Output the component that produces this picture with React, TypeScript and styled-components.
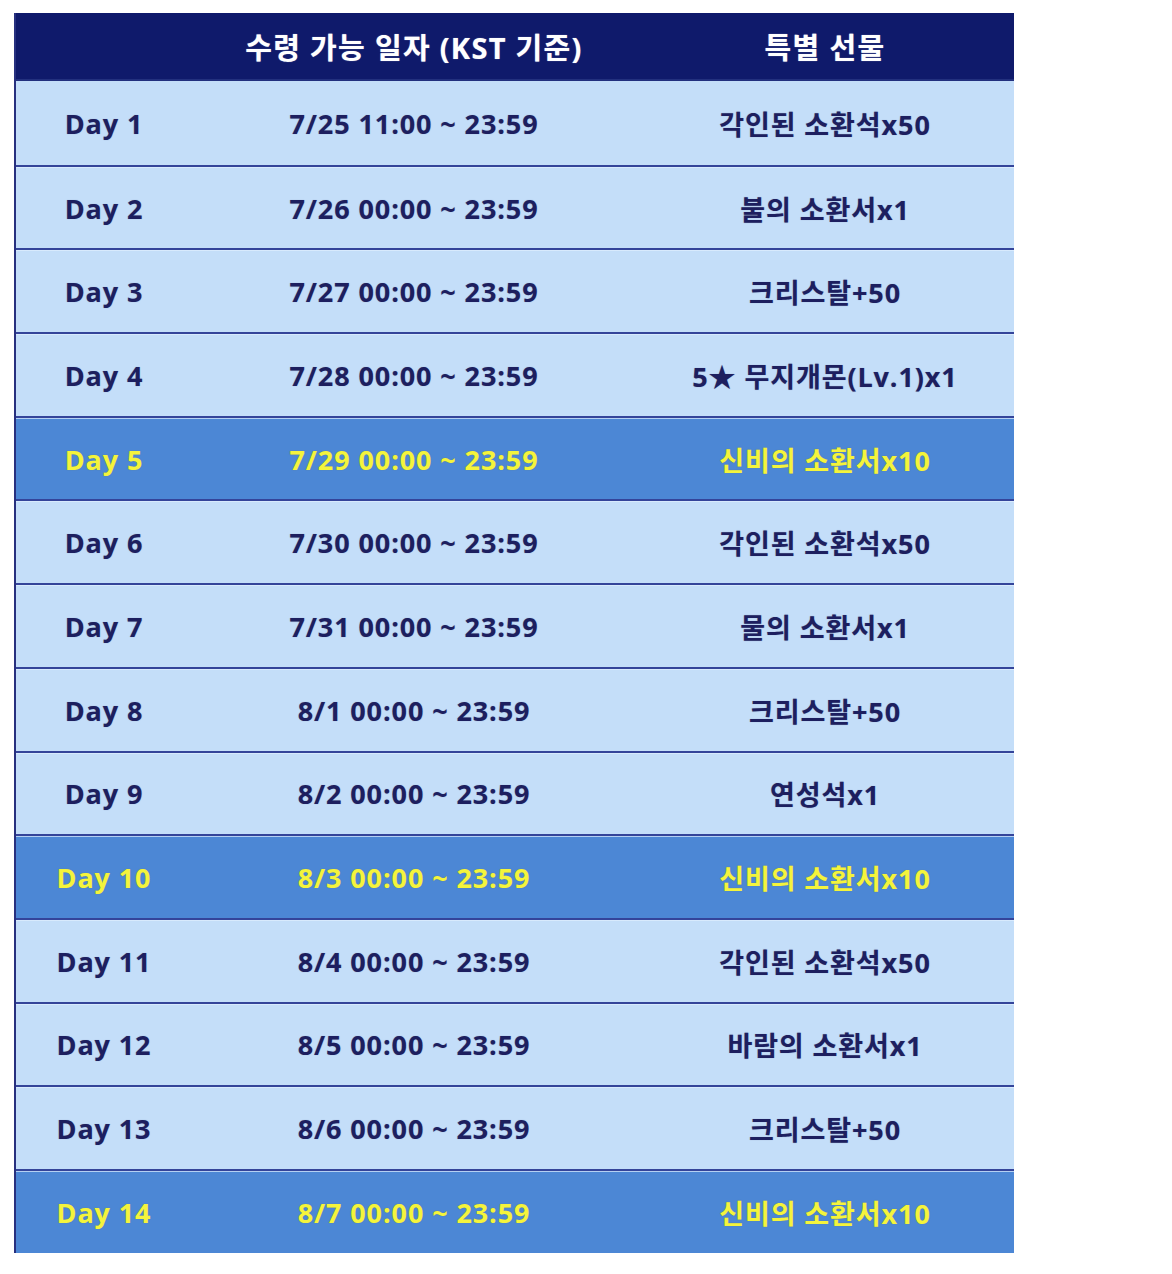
import React from "react";
import styled, { createGlobalStyle } from "styled-components";

const Global = createGlobalStyle`
  html, body { margin: 0; padding: 0; background: #ffffff; }
  body { font-family: "Open Sans", "Noto Sans CJK KR", "Noto Sans", sans-serif; }
`;

const Page = styled.div`
  padding: 13px 0 0 14px;
`;

const Table = styled.div`
  width: 1000px;
  display: flex;
  flex-direction: column;
  border-left: 2px solid #27307f;
  box-sizing: border-box;
`;

const cols = "176px 444px 378px";

const HeaderRow = styled.div`
  display: grid;
  grid-template-columns: ${cols};
  height: 68px;
  box-sizing: border-box;
  background: #0f1a6b;
  border-bottom: 2px solid #22307e;
  align-items: center;
`;

const HeadCell = styled.div`
  text-align: center;
  color: #ffffff;
  font-weight: 700;
  font-size: 29px;
  letter-spacing: 1.3px;
  white-space: nowrap;
  text-shadow: 0 0 1px rgba(255, 255, 255, 0.6);
`;

const Row = styled.div<{ $hl?: boolean }>`
  display: grid;
  grid-template-columns: ${cols};
  height: 83.7px;
  box-sizing: border-box;
  align-items: center;
  background: ${(p) => (p.$hl ? "#4c87d5" : "#c4def9")};
  border-top: 2px solid #34449a;
  box-shadow: inset 0 1px 0 rgba(225, 240, 255, 0.7);
  &:first-of-type {
    border-top: none;
    box-shadow: none;
  }
`;

const Cell = styled.div<{ $hl?: boolean }>`
  text-align: center;
  font-weight: 700;
  font-size: 27px;
  letter-spacing: 0.9px;
  white-space: nowrap;
  color: ${(p) => (p.$hl ? "#f4f43c" : "#1d1f5f")};
  text-shadow: ${(p) =>
    p.$hl ? "0 0 1px rgba(120, 120, 40, 0.6)" : "0 0 1px rgba(29, 31, 95, 0.35)"};
  padding-top: 1px;
`;

type Item = { day: string; date: string; gift: string; hl?: boolean };

const data: Item[] = [
  { day: "Day 1", date: "7/25 11:00 ~ 23:59", gift: "각인된 소환석x50" },
  { day: "Day 2", date: "7/26 00:00 ~ 23:59", gift: "불의 소환서x1" },
  { day: "Day 3", date: "7/27 00:00 ~ 23:59", gift: "크리스탈+50" },
  { day: "Day 4", date: "7/28 00:00 ~ 23:59", gift: "5★ 무지개몬(Lv.1)x1" },
  { day: "Day 5", date: "7/29 00:00 ~ 23:59", gift: "신비의 소환서x10", hl: true },
  { day: "Day 6", date: "7/30 00:00 ~ 23:59", gift: "각인된 소환석x50" },
  { day: "Day 7", date: "7/31 00:00 ~ 23:59", gift: "물의 소환서x1" },
  { day: "Day 8", date: "8/1 00:00 ~ 23:59", gift: "크리스탈+50" },
  { day: "Day 9", date: "8/2 00:00 ~ 23:59", gift: "연성석x1" },
  { day: "Day 10", date: "8/3 00:00 ~ 23:59", gift: "신비의 소환서x10", hl: true },
  { day: "Day 11", date: "8/4 00:00 ~ 23:59", gift: "각인된 소환석x50" },
  { day: "Day 12", date: "8/5 00:00 ~ 23:59", gift: "바람의 소환서x1" },
  { day: "Day 13", date: "8/6 00:00 ~ 23:59", gift: "크리스탈+50" },
  { day: "Day 14", date: "8/7 00:00 ~ 23:59", gift: "신비의 소환서x10", hl: true },
];

export default function App() {
  return (
    <>
      <Global />
      <Page>
        <Table>
          <HeaderRow>
            <HeadCell />
            <HeadCell>수령 가능 일자 (KST 기준)</HeadCell>
            <HeadCell>특별 선물</HeadCell>
          </HeaderRow>
          <div>
            {data.map((d) => (
              <Row key={d.day} $hl={d.hl}>
                <Cell $hl={d.hl}>{d.day}</Cell>
                <Cell $hl={d.hl}>{d.date}</Cell>
                <Cell $hl={d.hl}>{d.gift}</Cell>
              </Row>
            ))}
          </div>
        </Table>
      </Page>
    </>
  );
}
